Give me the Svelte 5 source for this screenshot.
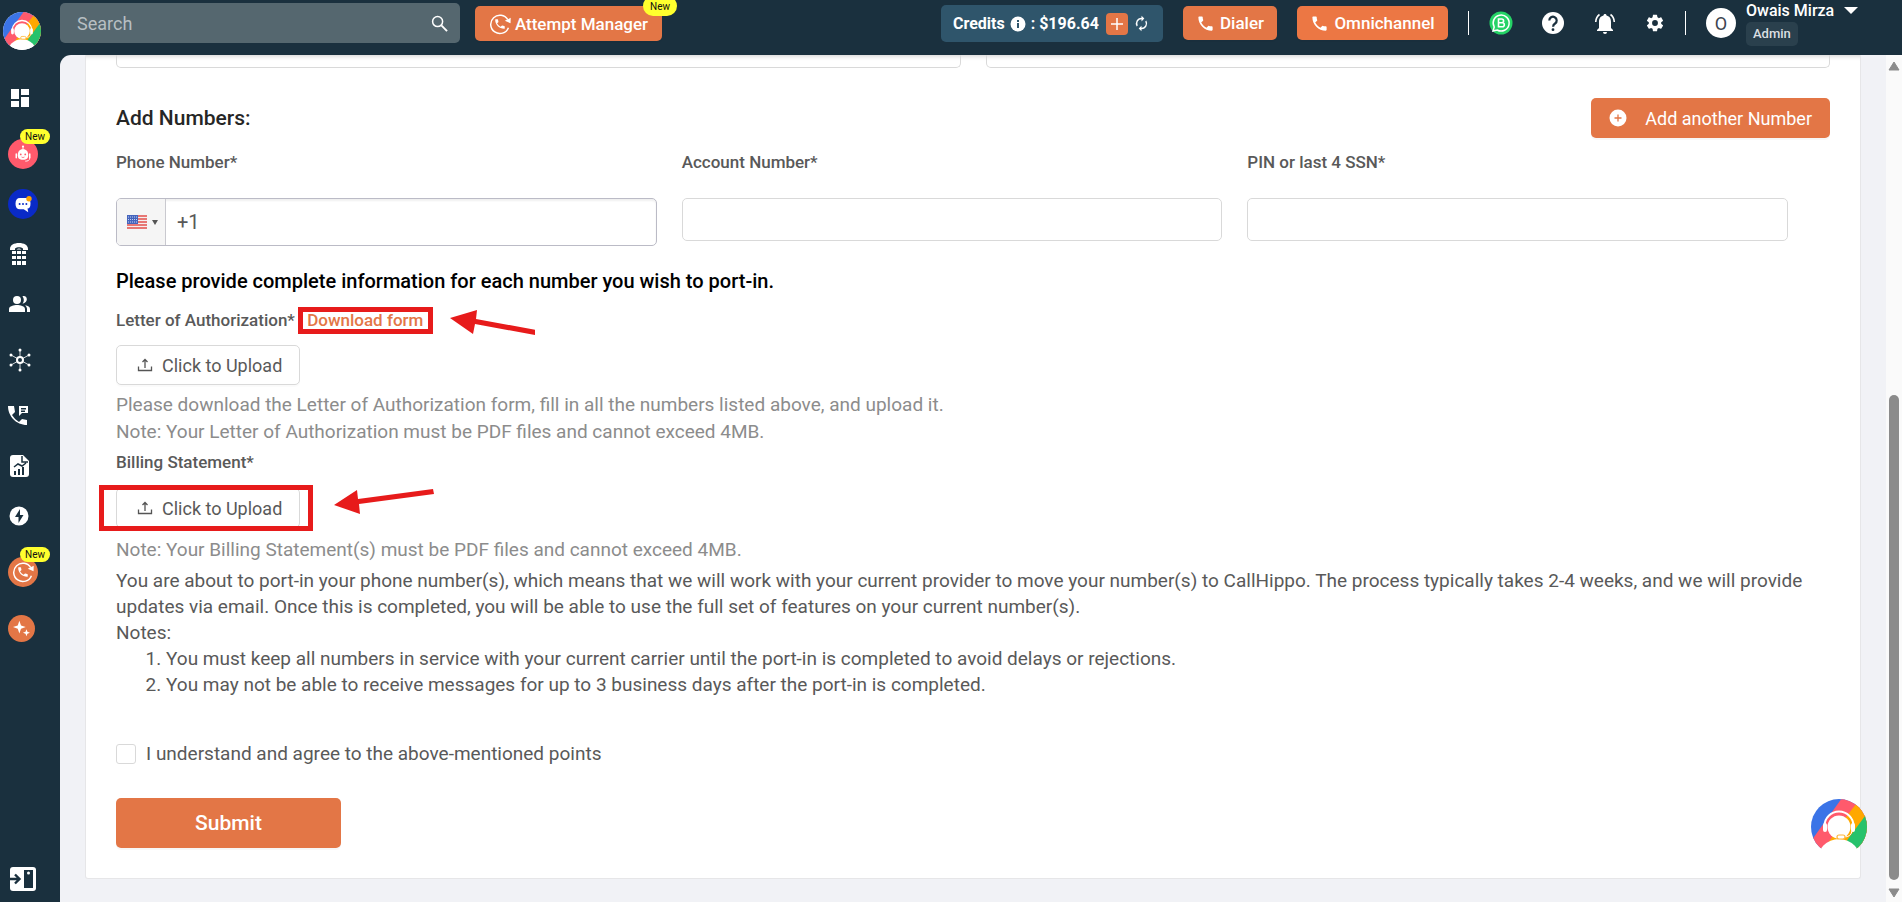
<script>
	let phone = '+1';
	let country = 'us';
	let agreed = false;
	let search = '';

	// "wide" items get a bit more room above them
	const menu = [
		{ name: 'Dashboard', icon: 'dashboard' },
		{ name: 'AI Agent', icon: 'bot', round: 'pink', badge: true, wide: true },
		{ name: 'Inbox', icon: 'chat', round: 'blue' },
		{ name: 'Numbers', icon: 'dialpad' },
		{ name: 'Users', icon: 'users' },
		{ name: 'Integrations', icon: 'hub', wide: true },
		{ name: 'Call Logs', icon: 'calls', wide: true },
		{ name: 'Reports', icon: 'report' },
		{ name: 'Power Dialer', icon: 'bolt' },
		{ name: 'Attempt Manager', icon: 'attempt', round: 'orange', badge: true, wide: true },
		{ name: 'AI Tools', icon: 'sparkle', round: 'orange small', wide: true }
	];

	const phonePath = 'M6.6 10.8c1.4 2.8 3.8 5.1 6.6 6.6l2.2-2.2c.3-.3.7-.4 1-.2 1.1.4 2.3.6 3.6.6.6 0 1 .4 1 1V20c0 .6-.4 1-1 1C10.6 21 3 13.4 3 4c0-.6.4-1 1-1h3.500c.6 0 1 .4 1 1 0 1.200.2 2.400.6 3.600.1.3 0 .7-.2 1z';
</script>

{#snippet logo(id)}
	<svg class="logo" viewBox="0 0 56 56" aria-hidden="true">
		<clipPath {id}><circle cx="28" cy="28" r="28" /></clipPath>
		<circle cx="28" cy="28" r="28" fill="#fff" />
		<g clip-path="url(#{id})">
			<rect width="56" height="49.5" fill="#3b74e7" />
			<path d="M31 -1H60V49.5H-5L3 38z" fill="#ff5a6c" />
			<path d="M50 -1H60V49.5H13L38 14z" fill="#ffa800" />
			<path d="M54 17L60 9V49.5H30.5L37 40z" fill="#27c26c" />
			<circle cx="28" cy="62" r="22" fill="#fff" />
			<circle cx="28" cy="28" r="11.5" fill="#fff" />
			<path d="M13.5 29v-2a14.5 14.5 0 0 1 29 0v2" fill="none" stroke="#fff" stroke-width="2" />
			<rect x="12" y="24" width="4" height="9" rx="2" fill="#fff" />
			<rect x="40" y="24" width="4" height="9" rx="2" fill="#fff" />
			<path d="M41 32q-1 6-8 6" fill="none" stroke="#fff" stroke-width="1" />
			<rect x="26" y="36" width="8" height="4" rx="2" fill="#fff" stroke="#ffb636" stroke-width="1.2" />
		</g>
	</svg>
{/snippet}

{#snippet retry()}
	<svg viewBox="0 0 24 24" aria-hidden="true">
		<path d="M20.5 7.3A10 10 0 1 0 21.2 16" fill="none" stroke="#fff" stroke-width="1.6" />
		<path d="M17.2 8.5l6.5-3.2-.2 6z" fill="#fff" />
		<path transform="translate(5 5) scale(.58)" d={phonePath} fill="#fff" />
	</svg>
{/snippet}

{#snippet upload()}
	<svg viewBox="0 0 16 16" aria-hidden="true">
		<path d="M1.5 9.5v4h13v-4M8 11V3M5.5 5L8 2.5 10.500 5" fill="none" stroke="#555" stroke-width="1.3" />
	</svg>
{/snippet}

<div class="app">
	<nav class="sidebar">
		<a class="brand" href="#home" aria-label="Home">{@render logo('brand')}</a>
		{#each menu as item}
			<a href="#{item.icon}" class="item" class:wide={item.wide} aria-label={item.name}>
				<span class="icon {item.round ? 'round ' + item.round : ''}">
					{#if item.icon === 'attempt'}
						{@render retry()}
					{:else}
						<svg viewBox="0 0 24 24" fill="#fff" aria-hidden="true">
							{#if item.icon === 'dashboard'}
								<path d="M3 13h8V3H3zm0 8h8v-6H3zm10 0h8V11h-8zm0-18v6h8V3z" />
							{:else if item.icon === 'bot'}
								<circle cx="12" cy="2" r="1.5" />
								<path d="M11.4 3h1.2v4h-1.2z" />
								<path d="M12 5.5c5 0 7 3.5 7 8 0 4-2 6-7 6s-7-2-7-6c0-4.5 2-8 7-8z" />
								<rect x="2" y="11" width="2" height="7" rx="1" />
								<rect x="20" y="11" width="2" height="7" rx="1" />
								<path d="M21 17c0 4-3 4.5-6 4.5" fill="none" stroke="#fff" stroke-width="1.2" />
								<circle cx="9" cy="12.5" r="1.2" fill="#ff5a6c" />
								<circle cx="15" cy="12.5" r="1.2" fill="#ff5a6c" />
								<path d="M10 16q2 1.5 4 0" fill="none" stroke="#ff5a6c" />
							{:else if item.icon === 'chat'}
								<path d="M8 4h8q6 0 6 7t-4 7l1 5-6-4H8q-6 0-6-7.5T8 4z" />
								<circle cx="7.5" cy="12" r="1.3" fill="#0a2ac7" />
								<circle cx="12" cy="12" r="1.3" fill="#0a2ac7" />
								<circle cx="16.5" cy="12" r="1.3" fill="#0a2ac7" />
								<circle cx="20" cy="5" r="3.6" fill="#ffa400" />
							{:else if item.icon === 'dialpad'}
								<path d="M2 7c0-4 4-6 9-6s9 2 9 6v1h-5V6.5c-2-1.7-6-1.7-8 0V8H2z" />
								<path d="M4 9h4v3H4zm5 0h4v3H9zm5 0h4v3h-4zM4 14h4v3H4zm5 0h4v3H9zm5 0h4v3h-4zM4 19h4v4H4zm5 0h4v4H9zm5 0h4v4h-4z" />
								<path d="M8.5 7.5q2.5-2 5 0z" />
							{:else if item.icon === 'users'}
								<circle cx="9" cy="8" r="4" />
								<path d="M1 20v-3c0-3 5-4 8-4s8 1 8 4v3zM14.5 4.3c5-1.5 6.5 6.2 0 7.5 1.8-2.5 1.8-5 0-7.5zM17 13.2c3 .5 5 1.6 5 3.8v3h-3v-3c0-1.6-.8-2.9-2-3.8z" />
							{:else if item.icon === 'hub'}
								<path d="M12 2v20M3 7l18 10M3 17L21 7" stroke="#fff" stroke-width=".8" />
								<circle cx="12" cy="12" r="3" fill="#1a303e" stroke="#fff" stroke-width="2" />
								<circle cx="12" cy="2" r="1.5" /><circle cx="12" cy="22" r="1.5" />
								<circle cx="3" cy="7" r="1.5" /><circle cx="21" cy="17" r="1.5" />
								<circle cx="3" cy="17" r="1.5" /><circle cx="21" cy="7" r="1.5" />
							{:else if item.icon === 'calls'}
								<path d="M0 2h6l1 6-3 3q3 5 7 7l3-3 5 1v5C8 21 0 12 0 2z" />
								<path d="M11 2h9v7h-6l-3 3zM13 4v1.5h5V4zm0 2.5V8h4V6.5z" fill-rule="evenodd" />
							{:else if item.icon === 'report'}
								<path d="M5 1h10l6 6v13q0 3-3 3H5q-3 0-3-3V4q0-3 3-3z" />
								<path d="M14 2v6h6M6 13l4-3 4 2 4-3" fill="none" stroke="#1a303e" stroke-width="1.5" />
								<path d="M6 17h2v4H6zm4-2h2v6h-2zm4-2h2v8h-2z" fill="#1a303e" />
							{:else if item.icon === 'bolt'}
								<circle cx="11" cy="12" r="9.5" />
								<path d="M12 5l-5 8h3.5v6L15.5 11H12z" fill="#1a303e" />
							{:else}
								<path d="M9 1l2.3 6.7L18 10l-6.7 2.3L9 19l-2.3-6.7L0 10l6.7-2.3zM19 13l1.3 3.7L24 18l-3.7 1.3L19 23l-1.3-3.7L14 18l3.7-1.3z" />
							{/if}
						</svg>
					{/if}
				</span>
				{#if item.badge}<span class="new">New</span>{/if}
			</a>
		{/each}
		<button class="expand" aria-label="Expand menu">
			<svg viewBox="0 0 26 24" aria-hidden="true">
				<rect width="26" height="24" rx="3" fill="#fff" />
				<rect x="14" y="3" width="9" height="18" fill="#1a303e" />
				<path d="M0 12h9M5 7.5L9.5 12 5 16.5" fill="none" stroke="#1a303e" stroke-width="2.4" />
				<circle cx="18.5" cy="6" r="1.5" fill="#fff" />
			</svg>
		</button>
	</nav>

	<div class="page">
		<header>
			<label class="search">
				<input type="text" placeholder="Search" aria-label="Search" bind:value={search} />
				<svg viewBox="0 0 18 18" aria-hidden="true">
					<path d="M11 11l6 6" stroke="#fff" stroke-width="2" />
					<circle cx="7" cy="7" r="5.3" fill="none" stroke="#fff" stroke-width="1.6" />
				</svg>
			</label>
			<button class="btn attempt">
				{@render retry()}
				Attempt Manager
				<span class="new">New</span>
			</button>

			<div class="credits">
				<span>Credits</span>
				<svg viewBox="0 0 16 16" width="16" height="16" aria-hidden="true">
					<circle cx="8" cy="8" r="7.5" fill="#fff" />
					<path d="M7 7h2v5H7zM7 4h2v2H7z" fill="#2f556b" />
				</svg>
				<span>: $196.64</span>
				<button class="plus" aria-label="Add credits">
					<svg viewBox="0 0 22 22" aria-hidden="true"><path d="M11 5v12M5 11h12" stroke="#fff" stroke-width="1.5" /></svg>
				</button>
				<button class="refresh" aria-label="Refresh credits">
					<svg viewBox="0 0 24 24" fill="#fff" aria-hidden="true">
						<path d="M12 6v3l4-4-4-4v3a8 8 0 0 0-6.8 12.3l1.5-1.5A6 6 0 0 1 12 6zm6.8 1.7l-1.5 1.5A6 6 0 0 1 12 18v-3l-4 4 4 4v-3a8 8 0 0 0 6.800-12.300z" />
					</svg>
				</button>
			</div>
			<button class="btn call">
				<svg viewBox="0 0 24 24" fill="#fff" aria-hidden="true"><path d={phonePath} /></svg>
				Dialer
			</button>
			<button class="btn call omni">
				<svg viewBox="0 0 24 24" fill="#fff" aria-hidden="true"><path d={phonePath} /></svg>
				Omnichannel
			</button>

			<div class="tools">
				<button aria-label="WhatsApp">
					<svg viewBox="0 0 24 24" aria-hidden="true">
						<circle cx="12" cy="12" r="11.5" fill="#25d366" />
						<path d="M4 20l1.2-4a8 8 0 1 1 3 3z" fill="none" stroke="#fff" stroke-width="1.5" />
						<path d="M9.5 8h3.2a1.8 1.8 0 0 1 0 3.8H9.5zm0 3.8h3.8a2 2 0 0 1 0 4H9.5z" fill="none" stroke="#fff" stroke-width="1.6" />
					</svg>
				</button>
				<button aria-label="Help">
					<svg viewBox="0 0 24 24" aria-hidden="true">
						<circle cx="12" cy="12" r="11" fill="#fff" />
						<path d="M8.3 9.5a3.7 3.7 0 1 1 5.8 3c-1.5 1-2 1.5-2 3.2" fill="none" stroke="#1a303e" stroke-width="2.2" />
						<circle cx="12" cy="18.7" r="1.4" fill="#1a303e" />
					</svg>
				</button>
				<button aria-label="Notifications">
					<svg viewBox="0 0 24 24" fill="#fff" aria-hidden="true">
						<path d="M12 3c1 0 1.5.6 1.5 1.5C17 5.3 18 8 18 11v6l2 2v1H4v-1l2-2v-6c0-3 1-5.700 4.500-6.500C10.500 3.600 11 3 12 3zM10 21h4q0 2-2 2t-2-2z" />
						<path d="M6.5 3.5Q3 6 2.7 11M17.5 3.5Q21 6 21.3 11" fill="none" stroke="#fff" stroke-width="1.6" />
					</svg>
				</button>
				<button aria-label="Settings">
					<svg viewBox="0 0 24 24" fill="#fff" aria-hidden="true">
						<path d="M19.4 13a7.5 7.5 0 0 0 0-1.9l2.1-1.6c.2-.1.2-.4.1-.6l-2-3.5c-.1-.2-.4-.3-.6-.2l-2.5 1a7 7 0 0 0-1.6-1l-.4-2.6A.5.5 0 0 0 14 2.2h-4c-.3 0-.5.1-.5.4l-.4 2.6a8 8 0 0 0-1.6 1l-2.5-1c-.2-.1-.5 0-.6.2l-2 3.5c-.1.2-.1.5.1.6L4.6 11a7 7 0 0 0 0 2l-2.1 1.6c-.2.1-.2.4-.1.6l2 3.5c.1.2.4.3.6.2l2.5-1c.5.4 1 .7 1.6 1l.4 2.6c0 .3.2.4.5.4h4c.3 0 .5-.1.5-.4l.4-2.6a7 7 0 0 0 1.6-1l2.5 1c.2.1.5 0 .6-.2l2-3.5c.1-.2.1-.5-.1-.6zM12 15.5a3.5 3.5 0 1 1 0-7 3.5 3.5 0 0 1 0 7z" />
					</svg>
				</button>
			</div>

			<div class="user">
				<span class="avatar">O</span>
				<div>
					<button class="name">
						Owais Mirza
						<svg viewBox="0 0 14 7" width="14" height="7" aria-hidden="true"><path d="M0 0h14L7 7z" fill="#fff" /></svg>
					</button>
					<span class="role">Admin</span>
				</div>
			</div>
		</header>

		<div class="body">
			<main>
				<form class="card" on:submit|preventDefault>
					<div class="previous">
						<input type="text" aria-label="City" />
						<input type="text" aria-label="Zip code" />
					</div>

					<div class="title">
						<h2>Add Numbers:</h2>
						<button type="button" class="btn add">
							<svg viewBox="0 0 18 18" aria-hidden="true">
								<circle cx="9" cy="9" r="8.5" fill="#fff" />
								<path d="M9 5.5v7M5.5 9h7" stroke="#e37646" stroke-width="1.3" />
							</svg>
							Add another Number
						</button>
					</div>

					<div class="numbers">
						<div class="field">
							<label for="phone">Phone Number*</label>
							<div class="phone">
								<div class="country">
									<svg viewBox="0 0 20 14" width="20" height="14" aria-hidden="true">
										<rect width="20" height="14" fill="#f5eeee" />
										<path d="M0 1h20M0 4h20M0 7h20M0 10h20M0 13h20" stroke="#e2504c" stroke-width="1.5" />
										<rect width="11" height="9" fill="#4565bd" />
										<path d="M1 2h9M1 4.5h9M1 7h9" stroke="#c3d0f2" stroke-dasharray="1 1" />
									</svg>
									<svg viewBox="0 0 6 5" width="6" height="5" aria-hidden="true"><path d="M0 0h6L3 5z" fill="#555" /></svg>
									<select aria-label="Country" bind:value={country}>
										<option value="us">United States</option>
										<option value="gb">United Kingdom</option>
									</select>
								</div>
								<input id="phone" type="tel" bind:value={phone} />
							</div>
						</div>
						<div class="field">
							<label for="account">Account Number*</label>
							<input id="account" type="text" />
						</div>
						<div class="field">
							<label for="pin">PIN or last 4 SSN*</label>
							<input id="pin" type="text" />
						</div>
					</div>

					<p class="lead">Please provide complete information for each number you wish to port-in.</p>

					<div class="caption">
						Letter of Authorization*
						<a class="download" href="#form">
							Download form
							<svg class="arrow" viewBox="0 0 85 26" width="85" height="26" aria-hidden="true">
								<path d="M0 9L27 1l-1 9 60 11-1 5-60-11-2 10z" fill="#e71b1b" />
							</svg>
						</a>
					</div>
					<button type="button" class="upload">{@render upload()} Click to Upload</button>
					<p class="hint">
						Please download the Letter of Authorization form, fill in all the numbers listed above, and upload it.<br />
						Note: Your Letter of Authorization must be PDF files and cannot exceed 4MB.
					</p>

					<div class="caption">Billing Statement*</div>
					<div class="marked">
						<button type="button" class="upload">{@render upload()} Click to Upload</button>
						<svg class="arrow" viewBox="0 0 100 26" width="100" height="26" aria-hidden="true">
							<path d="M0 16L23 1l1 9 75-10 1 5-75 10 1 10z" fill="#e71b1b" />
						</svg>
					</div>
					<p class="hint">Note: Your Billing Statement(s) must be PDF files and cannot exceed 4MB.</p>

					<div class="terms">
						<p>
							You are about to port-in your phone number(s), which means that we will work with your current
							provider to move your number(s) to CallHippo. The process typically takes 2-4 weeks, and we will
							provide updates via email. Once this is completed, you will be able to use the full set of
							features on your current number(s).
						</p>
						<p>Notes:</p>
						<ol>
							<li>You must keep all numbers in service with your current carrier until the port-in is completed to avoid delays or rejections.</li>
							<li>You may not be able to receive messages for up to 3 business days after the port-in is completed.</li>
						</ol>
					</div>

					<label class="agree">
						<input type="checkbox" bind:checked={agreed} />
						I understand and agree to the above-mentioned points
					</label>

					<button class="btn submit">Submit</button>
				</form>
			</main>

			<div class="scrollbar" aria-hidden="true">
				<svg viewBox="0 0 12 10" width="12" height="10"><path d="M6 1l5 8H1z" fill="#8b8b8b" stroke="#8b8b8b" stroke-linejoin="round" /></svg>
				<div class="track"><div class="thumb"></div></div>
				<svg viewBox="0 0 12 10" width="12" height="10"><path d="M6 9l5-8H1z" fill="#8b8b8b" stroke="#8b8b8b" stroke-linejoin="round" /></svg>
			</div>
		</div>
	</div>

	<button class="help" aria-label="Support chat">{@render logo('support')}</button>
</div>

<style>
	:global(body) {
		margin: 0;
		background: #1a303e;
	}

	* {
		box-sizing: border-box;
	}

	.app {
		display: flex;
		min-height: 100vh;
		font-family: Roboto, "Liberation Sans", sans-serif;
		font-size: 18px;
		color: #595959;
		background: #1a303e;
	}

	button, input, select {
		font: inherit;
		color: inherit;
	}

	button {
		display: flex;
		align-items: center;
		padding: 0;
		border: 0;
		background: none;
		cursor: pointer;
	}

	svg {
		display: block;
		flex: none;
	}

	p, h2, ol {
		margin: 0;
	}

	a {
		text-decoration: none;
	}

	/* sidebar */
	.sidebar {
		display: flex;
		flex-direction: column;
		width: 60px;
		flex: none;
		padding: 12px 0 11px;
	}

	.brand {
		width: 38px;
		height: 61px;
		margin-left: 3px;
	}

	.logo {
		width: 100%;
	}

	.item {
		position: relative;
		display: flex;
		align-items: center;
		height: 50px;
		padding-left: 8px;
	}

	.item.wide {
		margin-top: 6px;
	}

	.icon svg {
		width: 24px;
		height: 24px;
	}

	.round {
		display: grid;
		place-items: center;
		width: 30px;
		height: 30px;
		border-radius: 50%;
	}

	.round svg {
		width: 18px;
		height: 18px;
	}

	.orange svg {
		width: 22px;
		height: 22px;
	}

	.round.small {
		width: 27px;
		height: 27px;
	}

	.small svg {
		width: 17px;
		height: 17px;
	}

	.pink {
		background: #ff5a6c;
	}

	.blue {
		background: #0a2ac7;
	}

	.orange {
		background: #e37646;
	}

	.new {
		position: absolute;
		top: 0;
		left: 20px;
		padding: 0 5px;
		border-radius: 8px;
		background: #ffff2e;
		color: #111;
		font-size: 10px;
		font-weight: 400;
		line-height: 15px;
	}

	.expand {
		width: 26px;
		margin: auto 0 0 10px;
	}

	.expand svg {
		width: 26px;
	}

	/* header */
	.page {
		display: flex;
		flex-direction: column;
		flex: 1;
		min-width: 0;
	}

	header {
		display: flex;
		align-items: flex-start;
		height: 55px;
		color: #fff;
	}

	.search {
		display: flex;
		align-items: center;
		width: 400px;
		height: 40px;
		margin-top: 3px;
		padding: 0 12px 0 15px;
		border-radius: 5px;
		background: #55676f;
	}

	.search input {
		flex: 1;
		border: 0;
		outline: 0;
		background: none;
	}

	.search input::placeholder {
		color: #b7bfc3;
	}

	.search svg {
		width: 17px;
	}

	.btn {
		justify-content: center;
		border-radius: 5px;
		background: #e37646;
		color: #fff;
		box-shadow: 0 2px 1px #00000008;
	}

	.attempt {
		position: relative;
		width: 187px;
		height: 35px;
		margin: 6px 0 0 15px;
		gap: 4px;
		font-size: 17px;
		font-weight: 500;
	}

	.attempt svg {
		width: 22px;
	}

	.attempt .new {
		top: -10px;
		left: auto;
		right: -15px;
		padding: 2px 7px 0;
		border-radius: 10px;
		line-height: 18px;
	}

	.credits {
		display: flex;
		align-items: center;
		gap: 5px;
		width: 222px;
		height: 37px;
		margin: 5px 0 0 auto;
		padding-left: 12px;
		border-radius: 5px;
		background: #2f556b;
		font-size: 16px;
		font-weight: 700;
	}

	.plus {
		width: 22px;
		height: 22px;
		margin-left: 2px;
		border-radius: 4px;
		background: #e37646;
	}

	.plus svg {
		width: 22px;
	}

	.refresh svg {
		width: 17px;
	}

	.call {
		width: 94px;
		height: 34px;
		margin: 6px 0 0 20px;
		gap: 5px;
		font-size: 17px;
		font-weight: 500;
	}

	.call svg {
		width: 19px;
	}

	.omni {
		width: 151px;
		background: #ec7744;
	}

	.tools {
		display: flex;
		align-items: center;
		gap: 28px;
		height: 24px;
		margin: 11px 0 0 20px;
		padding: 0 20px;
		border: solid #fff;
		border-width: 0 1px;
	}

	.tools svg {
		width: 24px;
	}

	.tools button:last-child svg {
		width: 20px;
	}

	.user {
		display: flex;
		gap: 10px;
		width: 216px;
		padding-left: 20px;
	}

	.avatar {
		display: grid;
		place-items: center;
		width: 30px;
		height: 30px;
		margin-top: 8px;
		border-radius: 50%;
		background: #fff;
		color: #3c4450;
	}

	.name {
		gap: 10px;
		font-size: 16px;
		font-weight: 500;
		line-height: 21px;
	}

	.role {
		display: inline-block;
		padding: 0 7px;
		border-radius: 5px;
		background: #2a404d;
		color: #dadfe2;
		font-size: 13px;
		font-weight: 500;
		line-height: 24px;
	}

	/* content */
	.body {
		display: flex;
		flex: 1;
		overflow: hidden;
		border-top-left-radius: 11px;
		background: #f1f2f6;
	}

	main {
		flex: 1;
		min-width: 0;
		padding: 0 25px 23px;
	}

	.card {
		min-height: 100%;
		padding: 0 30px 30px;
		border: 1px solid #e6e6e8;
		border-top: 0;
		border-radius: 0 0 3px 3px;
		background: #fff;
		box-shadow: inset 0 6px 5px -5px #0003;
	}

	.previous {
		display: grid;
		grid-template-columns: 1fr 1fr;
		gap: 25px;
	}

	input {
		min-width: 0;
	}

	.previous input, .field > input {
		width: 100%;
		height: 43px;
		padding: 0 12px;
		border: 1px solid #d9d9d9;
		border-radius: 5px;
		background: transparent;
	}

	/* the row above is scrolled out, only its lower edge shows */
	.previous input {
		height: 13px;
		border-top: 0;
		border-radius: 0 0 5px 5px;
	}

	.title {
		display: flex;
		align-items: center;
		justify-content: space-between;
		margin-top: 30px;
	}

	h2 {
		font-size: 21px;
		font-weight: 500;
		line-height: 24px;
		color: #262626;
	}

	.add {
		height: 40px;
		padding: 0 18px;
		gap: 18px;
	}

	.add svg {
		width: 18px;
	}

	.numbers {
		display: grid;
		grid-template-columns: repeat(3, 1fr);
		align-items: start;
		gap: 25px;
		margin: 12px 42px 22px 0;
	}

	.field label, .caption {
		display: block;
		font-size: 17px;
		font-weight: 500;
		line-height: 24px;
	}

	.field label {
		margin-bottom: 24px;
	}

	.phone {
		display: flex;
		height: 48px;
		border: 1px solid #bbbbc6;
		border-radius: 5px;
		box-shadow: inset 0 2px 2px #00000010;
	}

	.country {
		position: relative;
		display: flex;
		align-items: center;
		gap: 5px;
		width: 49px;
		padding-left: 10px;
		border-right: 1px solid #c9c9cf;
		border-radius: 4px 0 0 4px;
		background: #f5f5f5;
	}

	.country select {
		position: absolute;
		inset: 0;
		width: 100%;
		opacity: 0;
	}

	.phone input {
		flex: 1;
		padding: 0 11px;
		border: 0;
		outline: 0;
		background: none;
		font-size: 20px;
	}

	.lead {
		margin-bottom: 14px;
		color: #000;
		font-size: 20px;
		font-weight: 500;
		line-height: 26px;
	}

	.download {
		position: relative;
		display: inline-block;
		margin-left: 8px;
		color: #e37646;
	}

	.download::before {
		content: "";
		position: absolute;
		inset: -1px -10px -2px -9px;
		border: 5px solid #e71b1b;
	}

	.download .arrow {
		position: absolute;
		top: 1px;
		left: calc(100% + 27px);
	}

	.upload {
		height: 40px;
		padding: 0 17px 0 20px;
		gap: 9px;
		border: 1px solid #d9d9d9;
		border-radius: 5px;
		background: #fff;
		box-shadow: 0 2px 1px #00000005;
	}

	.caption + .upload {
		margin: 13px 0 6px;
	}

	.upload svg {
		width: 16px;
	}

	.hint {
		margin-bottom: 5px;
		color: #8c8c8c;
		font-size: 19px;
		line-height: 27px;
	}

	.marked {
		position: relative;
		width: max-content;
		margin: 14px 0 8px;
	}

	.marked::before {
		content: "";
		position: absolute;
		inset: -3px -13px -3px -17px;
		border: 5px solid #e71b1b;
	}

	.marked .arrow {
		position: absolute;
		top: 1px;
		left: calc(100% + 34px);
	}

	.terms {
		font-size: 19px;
		line-height: 26px;
	}

	ol {
		padding-left: 50px;
	}

	.agree {
		display: flex;
		align-items: center;
		gap: 10px;
		width: max-content;
		margin: 43px 0 31px;
		font-size: 19px;
		line-height: 26px;
	}

	.agree input {
		appearance: none;
		width: 20px;
		height: 20px;
		margin: 0;
		border: 1px solid #d9d9d9;
		border-radius: 3px;
	}

	.agree input:checked {
		background: #e37646;
	}

	.submit {
		width: 225px;
		height: 50px;
		font-size: 21px;
		font-weight: 500;
	}

	.scrollbar {
		display: flex;
		flex-direction: column;
		align-items: center;
		width: 16px;
		padding: 6px 0 4px;
		background: #fafafa;
	}

	.track {
		display: flex;
		align-items: flex-end;
		flex: 1;
		padding-bottom: 8px;
	}

	.thumb {
		width: 10px;
		height: 60%;
		border-radius: 5px;
		background: #8b8b8b;
	}

	.help {
		position: fixed;
		right: 35px;
		bottom: 47px;
		width: 56px;
	}
</style>
